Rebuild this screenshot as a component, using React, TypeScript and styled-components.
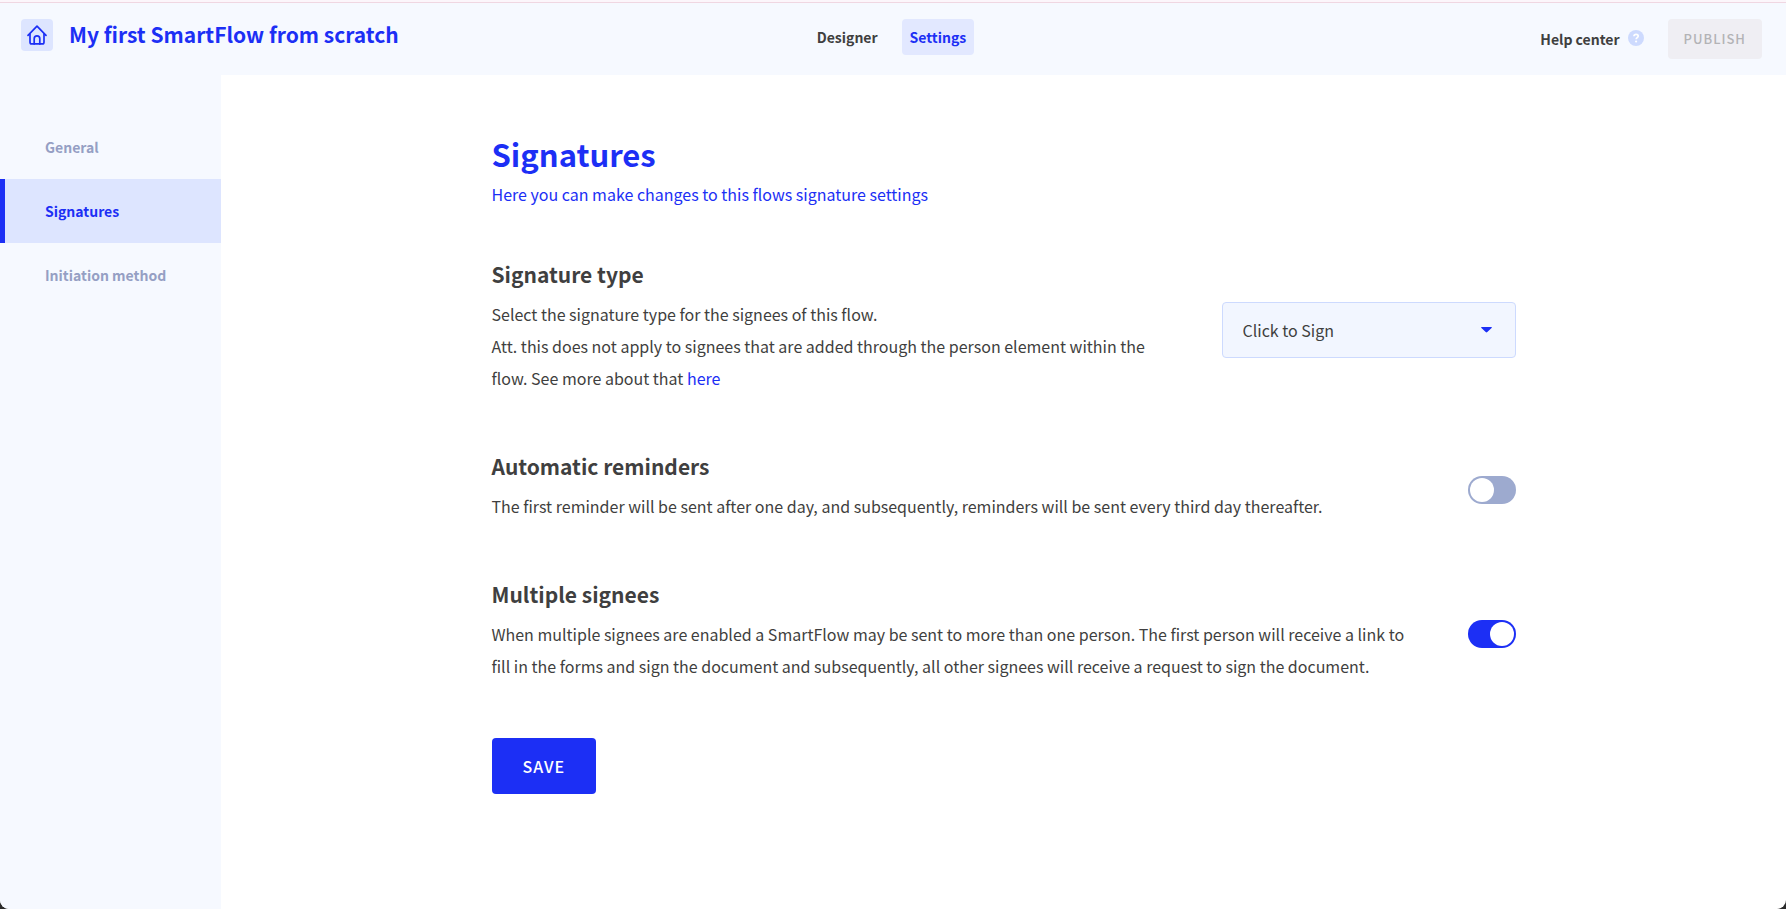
import React, { useState } from "react";
import styled, { createGlobalStyle } from "styled-components";

const blue = "#1c2ff5";
const ink = "#3f3f40";
const pale = "#f6f9ff";

const GlobalStyle = createGlobalStyle`
  * { box-sizing: border-box; }
  html { background: #2b2b2b; }
  body {
    margin: 0;
    color: ${ink};
    font: 400 16px/32px "Source Sans Pro", "Noto Sans CJK SC", sans-serif;
    -webkit-font-smoothing: antialiased;
  }
  button, select { font: inherit; color: inherit; }
  h1, h2, p { margin: 0; padding: 0; }
  a { color: ${blue}; text-decoration: none; }
`;

const Page = styled.div`
  display: flex;
  flex-direction: column;
  min-height: 100vh;
  overflow: hidden;
  background: #fff;
  border-radius: 0 0 9px 9px;
`;

const TopLine = styled.div`
  height: 3px;
  background: #fcf6fb;
  border-bottom: 1px solid #f0d7e2;
`;

const Header = styled.header`
  display: grid;
  grid-template-columns: 1fr auto 1fr;
  align-items: start;
  min-height: 72px;
  padding: 16px 24px 16px 21px;
  background: ${pale};
`;

const Brand = styled.div`
  display: flex;
  align-items: center;
  gap: 16px;
`;

const HomeLink = styled.a`
  display: grid;
  place-items: center;
  width: 32px;
  height: 32px;
  border-radius: 4px;
  background: #dde5ff;
`;

const FlowName = styled.div`
  padding-bottom: 2px;
  color: ${blue};
  font-size: 21px;
  font-weight: 700;
  line-height: 30px;
`;

const Tabs = styled.nav`
  display: flex;
  gap: 16px;
`;

const Tab = styled.a<{ $active?: boolean }>`
  padding: 0 8px;
  border-radius: 4px;
  font-size: 14px;
  font-weight: 700;
  line-height: 36px;
  color: ${(p) => (p.$active ? blue : ink)};
  background: ${(p) => (p.$active ? "#e2e8ff" : "transparent")};
`;

const Actions = styled.div`
  display: flex;
  justify-content: flex-end;
  align-items: center;
  gap: 24px;
`;

const HelpLink = styled.a`
  display: flex;
  align-items: center;
  gap: 8px;
  color: ${ink};
  font-size: 14px;
  font-weight: 700;

  svg {
    margin-bottom: 2px;
  }
`;

const PublishButton = styled.button`
  height: 40px;
  padding: 0 16px;
  border: 0;
  border-radius: 4px;
  background: #efeef3;
  color: #b3b3b6;
  font-size: 13px;
  font-weight: 500;
  letter-spacing: 1px;
`;

const Body = styled.div`
  display: flex;
  flex: 1;
`;

const Sidebar = styled.nav`
  flex: 0 0 221px;
  padding-top: 40px;
  background: ${pale};
`;

const SideLink = styled.a<{ $active?: boolean }>`
  display: block;
  padding-left: 40px;
  border-left: 5px solid ${(p) => (p.$active ? blue : "transparent")};
  background: ${(p) => (p.$active ? "#dde5ff" : "transparent")};
  color: ${(p) => (p.$active ? blue : "#959fc4")};
  font-size: 14px;
  font-weight: 700;
  line-height: 64px;
`;

const Main = styled.main`
  flex: 1;
  padding: 55px 48px;
`;

const Content = styled.form`
  display: flex;
  flex-direction: column;
  align-items: stretch;
  gap: 48px;
  max-width: 1024px;
  margin: 0 auto;
`;

const Intro = styled.div`
  color: ${blue};
`;

const Title = styled.h1`
  font-size: 31px;
  font-weight: 700;
  line-height: 48px;
`;

const Setting = styled.section`
  display: flex;
  align-items: center;
  justify-content: space-between;
  gap: 48px;
`;

const Copy = styled.div`
  padding-bottom: 8px;
`;

const SettingTitle = styled.h2`
  margin-bottom: 8px;
  font-size: 21px;
  font-weight: 700;
  line-height: 32px;
`;

const InlineLink = styled.a`
  display: inline-block;
`;

const SelectBox = styled.div`
  position: relative;
  flex: 0 0 294px;

  svg {
    position: absolute;
    top: 25px;
    right: 24px;
    pointer-events: none;
  }
`;

const Select = styled.select`
  display: block;
  width: 100%;
  height: 56px;
  padding: 0 20px;
  border: 1px solid #cddafe;
  border-radius: 4px;
  background: #f2f6ff;
  appearance: none;
`;

const Toggle = styled.input`
  appearance: none;
  flex: 0 0 48px;
  display: flex;
  height: 28px;
  margin: 0;
  padding: 2px;
  border-radius: 14px;
  background: #9daacf;
  cursor: pointer;

  &::before {
    content: "";
    width: 24px;
    height: 24px;
    border-radius: 50%;
    background: #fff;
  }

  &:checked {
    justify-content: flex-end;
    background: ${blue};
  }
`;

const SaveButton = styled.button`
  align-self: flex-start;
  height: 56px;
  padding: 0 31px;
  border: 0;
  border-radius: 4px;
  background: ${blue};
  color: #fff;
  font-weight: 500;
  letter-spacing: 1px;
  cursor: pointer;
`;

const HomeIcon = () => (
  <svg width="20" height="20" viewBox="0 0 20 20" fill="none" stroke={blue} strokeWidth="1.7" strokeLinecap="round" strokeLinejoin="round" aria-hidden="true">
    <path d="M1 10.3 10 1.2l9 9.1" />
    <path d="M3 9v8.2c0 1 .7 1.7 1.7 1.7h10.600c1 0 1.700-.7 1.700-1.700V9" />
    <path d="M7.200 18.900v-5.200a2.800 2.800 0 0 1 5.600 0v5.200" />
  </svg>
);

const HelpIcon = () => (
  <svg width="16" height="16" viewBox="0 0 16 16" aria-hidden="true">
    <circle cx="8" cy="8" r="8" fill="#cddafe" />
    <path d="M5.900 6.300c.1-1.300 1-2 2.200-2s2.100.7 2.100 1.800c0 1.500-2 1.600-2 3.100" fill="none" stroke="#fff" strokeWidth="1.700" />
    <circle cx="8.100" cy="11.500" r="1.100" fill="#fff" />
  </svg>
);

const CaretIcon = () => (
  <svg width="11" height="6" viewBox="0 0 11 6" aria-hidden="true">
    <path d="M.8 0h9.400c.6 0 .8.600.4 1L6.300 5.100c-.5.5-1.100.5-1.600 0L.4 1C0 .6.200 0 .8 0Z" fill={blue} />
  </svg>
);

export default function App() {
  const [reminders, setReminders] = useState(false);
  const [multiple, setMultiple] = useState(true);

  return (
    <Page>
      <GlobalStyle />
      <TopLine />
      <Header>
        <Brand>
          <HomeLink href="#home" aria-label="Home">
            <HomeIcon />
          </HomeLink>
          <FlowName>My first SmartFlow from scratch</FlowName>
        </Brand>
        <Tabs>
          <Tab href="#designer">Designer</Tab>
          <Tab href="#settings" $active>Settings</Tab>
        </Tabs>
        <Actions>
          <HelpLink href="#help">
            Help center
            <HelpIcon />
          </HelpLink>
          <PublishButton type="button" disabled>PUBLISH</PublishButton>
        </Actions>
      </Header>
      <Body>
        <Sidebar>
          <SideLink href="#general">General</SideLink>
          <SideLink href="#signatures" $active>Signatures</SideLink>
          <SideLink href="#initiation">Initiation method</SideLink>
        </Sidebar>
        <Main>
          <Content onSubmit={(e) => e.preventDefault()}>
            <Intro>
              <Title>Signatures</Title>
              <p>Here you can make changes to this flows signature settings</p>
            </Intro>
            <Setting>
              <Copy>
                <SettingTitle>
                  <label htmlFor="signature-type">Signature type</label>
                </SettingTitle>
                <p>Select the signature type for the signees of this flow.</p>
                <p>
                  Att. this does not apply to signees that are added through the person element within the
                  flow. See more about that <InlineLink href="#more">here</InlineLink>
                </p>
              </Copy>
              <SelectBox>
                <Select id="signature-type">
                  <option>Click to Sign</option>
                </Select>
                <CaretIcon />
              </SelectBox>
            </Setting>
            <Setting>
              <Copy>
                <SettingTitle>
                  <label htmlFor="reminders">Automatic reminders</label>
                </SettingTitle>
                <p>
                  The first reminder will be sent after one day, and subsequently, reminders will be sent
                  every third day thereafter.
                </p>
              </Copy>
              <Toggle id="reminders" type="checkbox" checked={reminders} onChange={(e) => setReminders(e.target.checked)} />
            </Setting>
            <Setting>
              <Copy>
                <SettingTitle>
                  <label htmlFor="multiple">Multiple signees</label>
                </SettingTitle>
                <p>
                  When multiple signees are enabled a SmartFlow may be sent to more than one person. The
                  first person will receive a link to fill in the forms and sign the document and
                  subsequently, all other signees will receive a request to sign the document.
                </p>
              </Copy>
              <Toggle id="multiple" type="checkbox" checked={multiple} onChange={(e) => setMultiple(e.target.checked)} />
            </Setting>
            <SaveButton type="submit">SAVE</SaveButton>
          </Content>
        </Main>
      </Body>
    </Page>
  );
}
